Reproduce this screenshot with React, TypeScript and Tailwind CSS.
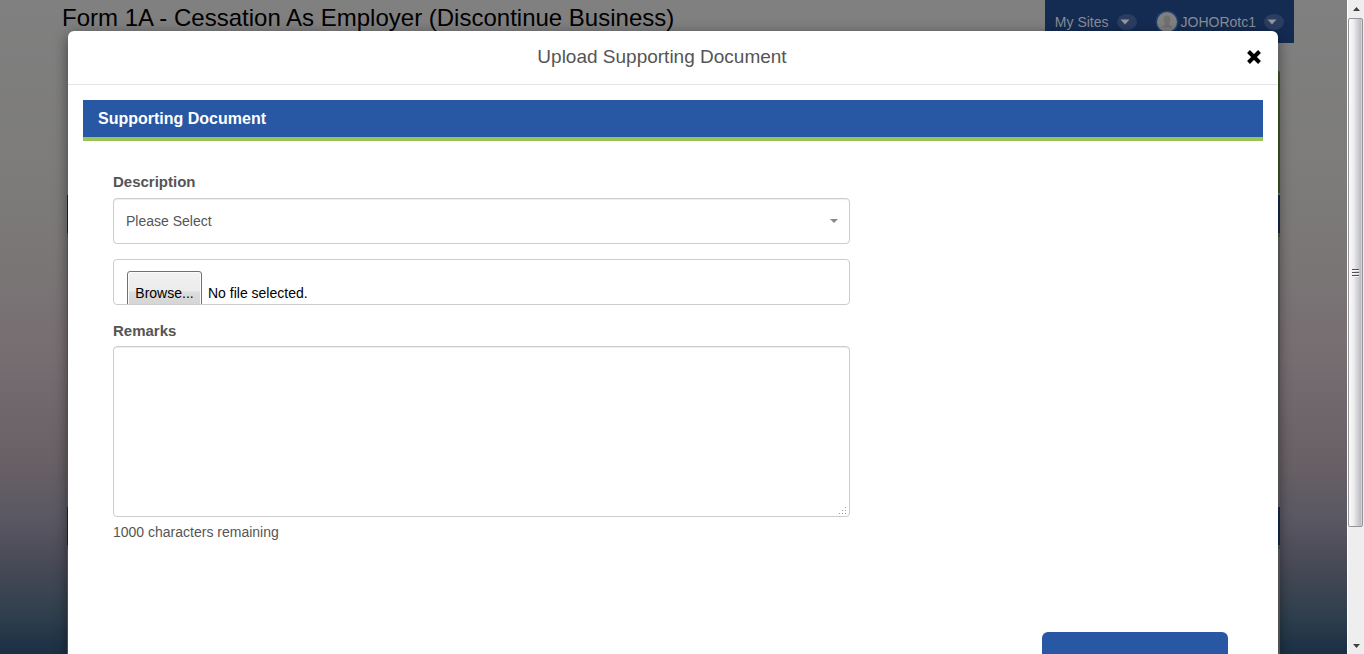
import { useState } from "react";

const MAX_REMARKS = 1000;

function CaretBadge() {
  return (
    <svg className="h-4 w-5" viewBox="0 0 20 16" aria-hidden="true">
      <ellipse cx="10" cy="8" rx="10" ry="8" fill="#2b3d61" />
      <path d="M3.500 5.500h9L8 10.500z" fill="#94979c" />
    </svg>
  );
}

function Avatar() {
  return (
    <svg className="h-6 w-6" viewBox="0 0 24 24" aria-hidden="true">
      <circle cx="12" cy="12" r="11.5" fill="#1d3f6e" />
      <circle cx="12" cy="12" r="10" fill="#808080" />
      <path d="M12 5.500c-2.600 0-3.800 1.800-3.600 4 .1 1.700.8 3.100 1.600 3.900v1.600c-1 .8-3 1-3.500 2.500h11c-.5-1.500-2.500-1.700-3.500-2.500v-1.600c.8-.8 1.500-2.200 1.600-3.900.2-2.200-1-4-3.600-4z" fill="#707070" />
    </svg>
  );
}

function PanelEdge({ tall }: { tall?: boolean }) {
  return (
    <div className={tall ? "h-[312px] bg-[#666666]" : "h-[160px] bg-[#666666]"}>
      <div className="h-[42px] border-b-4 border-[#4a622c] bg-[#142b52]" />
    </div>
  );
}

function PageBehind() {
  return (
    <div className="h-full overflow-hidden bg-[linear-gradient(180deg,#808080_0%,#7d7c7b_25%,#7a7676_40%,#766d71_55%,#665f64_72%,#5a5863_79%,#494a57_86%,#2f3f4d_94%,#1a2f44_100%)]">
      <header className="flex items-start justify-between pr-[53px] pl-[62px]">
        <h1 className="pt-1 text-[24px] leading-7 text-black">
          Form 1A - Cessation As Employer (Discontinue Business)
        </h1>
        <nav className="flex h-[43px] items-center gap-[18px] bg-[#142b52] px-[10px] pt-px text-[14px] text-[#8a8d93]">
          <a href="#sites" className="flex items-center gap-2">
            My Sites
            <CaretBadge />
          </a>
          <a href="#account" className="flex items-center gap-2">
            <span className="flex items-center gap-[2px]">
              <Avatar />
              JOHORotc1
            </span>
            <CaretBadge />
          </a>
        </nav>
      </header>
      <main className="mx-[67px] mt-[27px]">
        <div className="ml-auto h-[123px] w-[300px] rounded-t bg-[#3f5a27]" />
        <div className="mt-[2px]">
          <PanelEdge tall />
          <PanelEdge />
        </div>
      </main>
    </div>
  );
}

function UploadDialog() {
  const [remarks, setRemarks] = useState("");
  return (
    <div
      role="dialog"
      aria-labelledby="dialog-title"
      className="mr-[69px] ml-[68px] h-full rounded-t-md bg-white text-[#555555] shadow-[0_4px_14px_rgba(0,0,0,0.5)]"
    >
      <div className="flex h-[54px] items-center border-b border-[#e5e5e5] px-[15px] pb-[2px]">
        <h2 id="dialog-title" className="flex-1 text-center text-[19px] leading-6">
          Upload Supporting Document
        </h2>
        <button type="button" aria-label="Close" className="flex w-[22px] justify-end pr-px text-black">
          <svg className="h-4 w-4" viewBox="0 0 16 16" aria-hidden="true">
            <path d="M2.500 2.500l11 11M13.500 2.500l-11 11" stroke="currentColor" strokeWidth="4" />
          </svg>
        </button>
      </div>

      <form className="p-[15px]" onSubmit={(e) => e.preventDefault()}>
        <h3 className="h-[41px] border-b-4 border-[#99c45a] bg-[#2857a4] px-[15px] text-[16px] leading-[37px] font-bold text-white">
          Supporting Document
        </h3>

        <div className="pt-[31px] pr-[45px] pl-[30px]">
          <div className="w-2/3">
            <label htmlFor="description" className="block text-[15px] leading-5 font-bold">
              Description
            </label>
            <div className="relative mt-[6px]">
              <select
                id="description"
                className="block h-[46px] w-full appearance-none rounded border border-[#cccccc] bg-white px-3 text-[14px] shadow-[inset_0_1px_1px_rgba(0,0,0,0.07)]"
              >
                <option>Please Select</option>
              </select>
              <svg className="pointer-events-none absolute top-[21px] right-3 h-1 w-2" viewBox="0 0 8 4" aria-hidden="true">
                <path d="M0 0h8L4 4z" fill="#888888" />
              </svg>
            </div>

            <label
              htmlFor="document"
              className="mt-[15px] flex h-[46px] items-start gap-[6px] overflow-hidden rounded border border-[#cccccc] px-[13px] pt-[11px] text-[14px] text-black"
            >
              <span className="h-11 w-[75px] rounded-[3px] border border-[#707070] bg-[linear-gradient(180deg,#f2f2f2_0%,#ebebeb_46%,#dddddd_47%,#cfcfcf_100%)] text-center leading-[42px] shadow-[inset_0_0_0_1px_#fcfcfc]">
                Browse...
              </span>
              <span className="leading-[44px]">No file selected.</span>
              <input id="document" type="file" className="sr-only" />
            </label>

            <label htmlFor="remarks" className="mt-4 block text-[15px] leading-5 font-bold">
              Remarks
            </label>
            <div className="relative mt-[5px]">
              <textarea
                id="remarks"
                maxLength={MAX_REMARKS}
                value={remarks}
                onChange={(e) => setRemarks(e.target.value)}
                className="block h-[171px] w-full resize-none rounded border border-[#cccccc] px-3 py-2 text-[14px] shadow-[inset_0_1px_1px_rgba(0,0,0,0.07)]"
              />
              <svg className="pointer-events-none absolute right-[3px] bottom-[2px] h-2 w-2" viewBox="0 0 8 8" fill="#999999" aria-hidden="true">
                <path d="M6 0h1v1H6zM3 3h1v1H3zM6 3h1v1H6zM0 6h1v1H0zM3 6h1v1H3zM6 6h1v1H6z" />
              </svg>
            </div>
            <p className="mt-[5px] text-[14px] leading-5">{MAX_REMARKS - remarks.length} characters remaining</p>
          </div>
        </div>

        <div className="mt-[90px] flex justify-end pr-[35px]">
          <button type="submit" aria-label="Upload" className="h-[46px] w-[186px] rounded-md bg-[#2857a4]" />
        </div>
      </form>
    </div>
  );
}

function Scrollbar() {
  return (
    <div className="flex w-[17px] shrink-0 flex-col border-l border-white bg-[#eeeeee]" aria-hidden="true">
      <div className="flex h-[18px] items-center justify-center">
        <svg className="h-1 w-[7px]" viewBox="0 0 7 4">
          <path d="M3.500 0L7 4H0z" fill="#404040" />
        </svg>
      </div>
      <div className="mr-px flex h-[509px] items-center justify-center rounded-[2px] border border-[#949498] bg-[linear-gradient(90deg,#fafafa_0%,#eeeeee_35%,#d6d6da_60%,#bcbcc4_90%,#e0e0e4_100%)]">
        <svg className="h-2 w-[7px]" viewBox="0 0 7 8">
          <path d="M0 0h7v1H0zM0 3h7v1H0zM0 6h7v1H0z" fill="#505050" />
          <path d="M0 1h7v1H0zM0 4h7v1H0zM0 7h7v1H0z" fill="#f5f5f5" />
        </svg>
      </div>
      <div className="mt-auto flex h-[17px] items-center justify-center">
        <svg className="h-1 w-[7px]" viewBox="0 0 7 4">
          <path d="M0 0h7L3.500 4z" fill="#404040" />
        </svg>
      </div>
    </div>
  );
}

export default function App() {
  return (
    <div className="flex h-screen overflow-hidden font-['Liberation_Sans',Arial,sans-serif]">
      <div className="relative min-w-0 flex-1 overflow-hidden">
        <PageBehind />
        <div className="absolute inset-0 pt-[31px]">
          <UploadDialog />
        </div>
      </div>
      <Scrollbar />
    </div>
  );
}
